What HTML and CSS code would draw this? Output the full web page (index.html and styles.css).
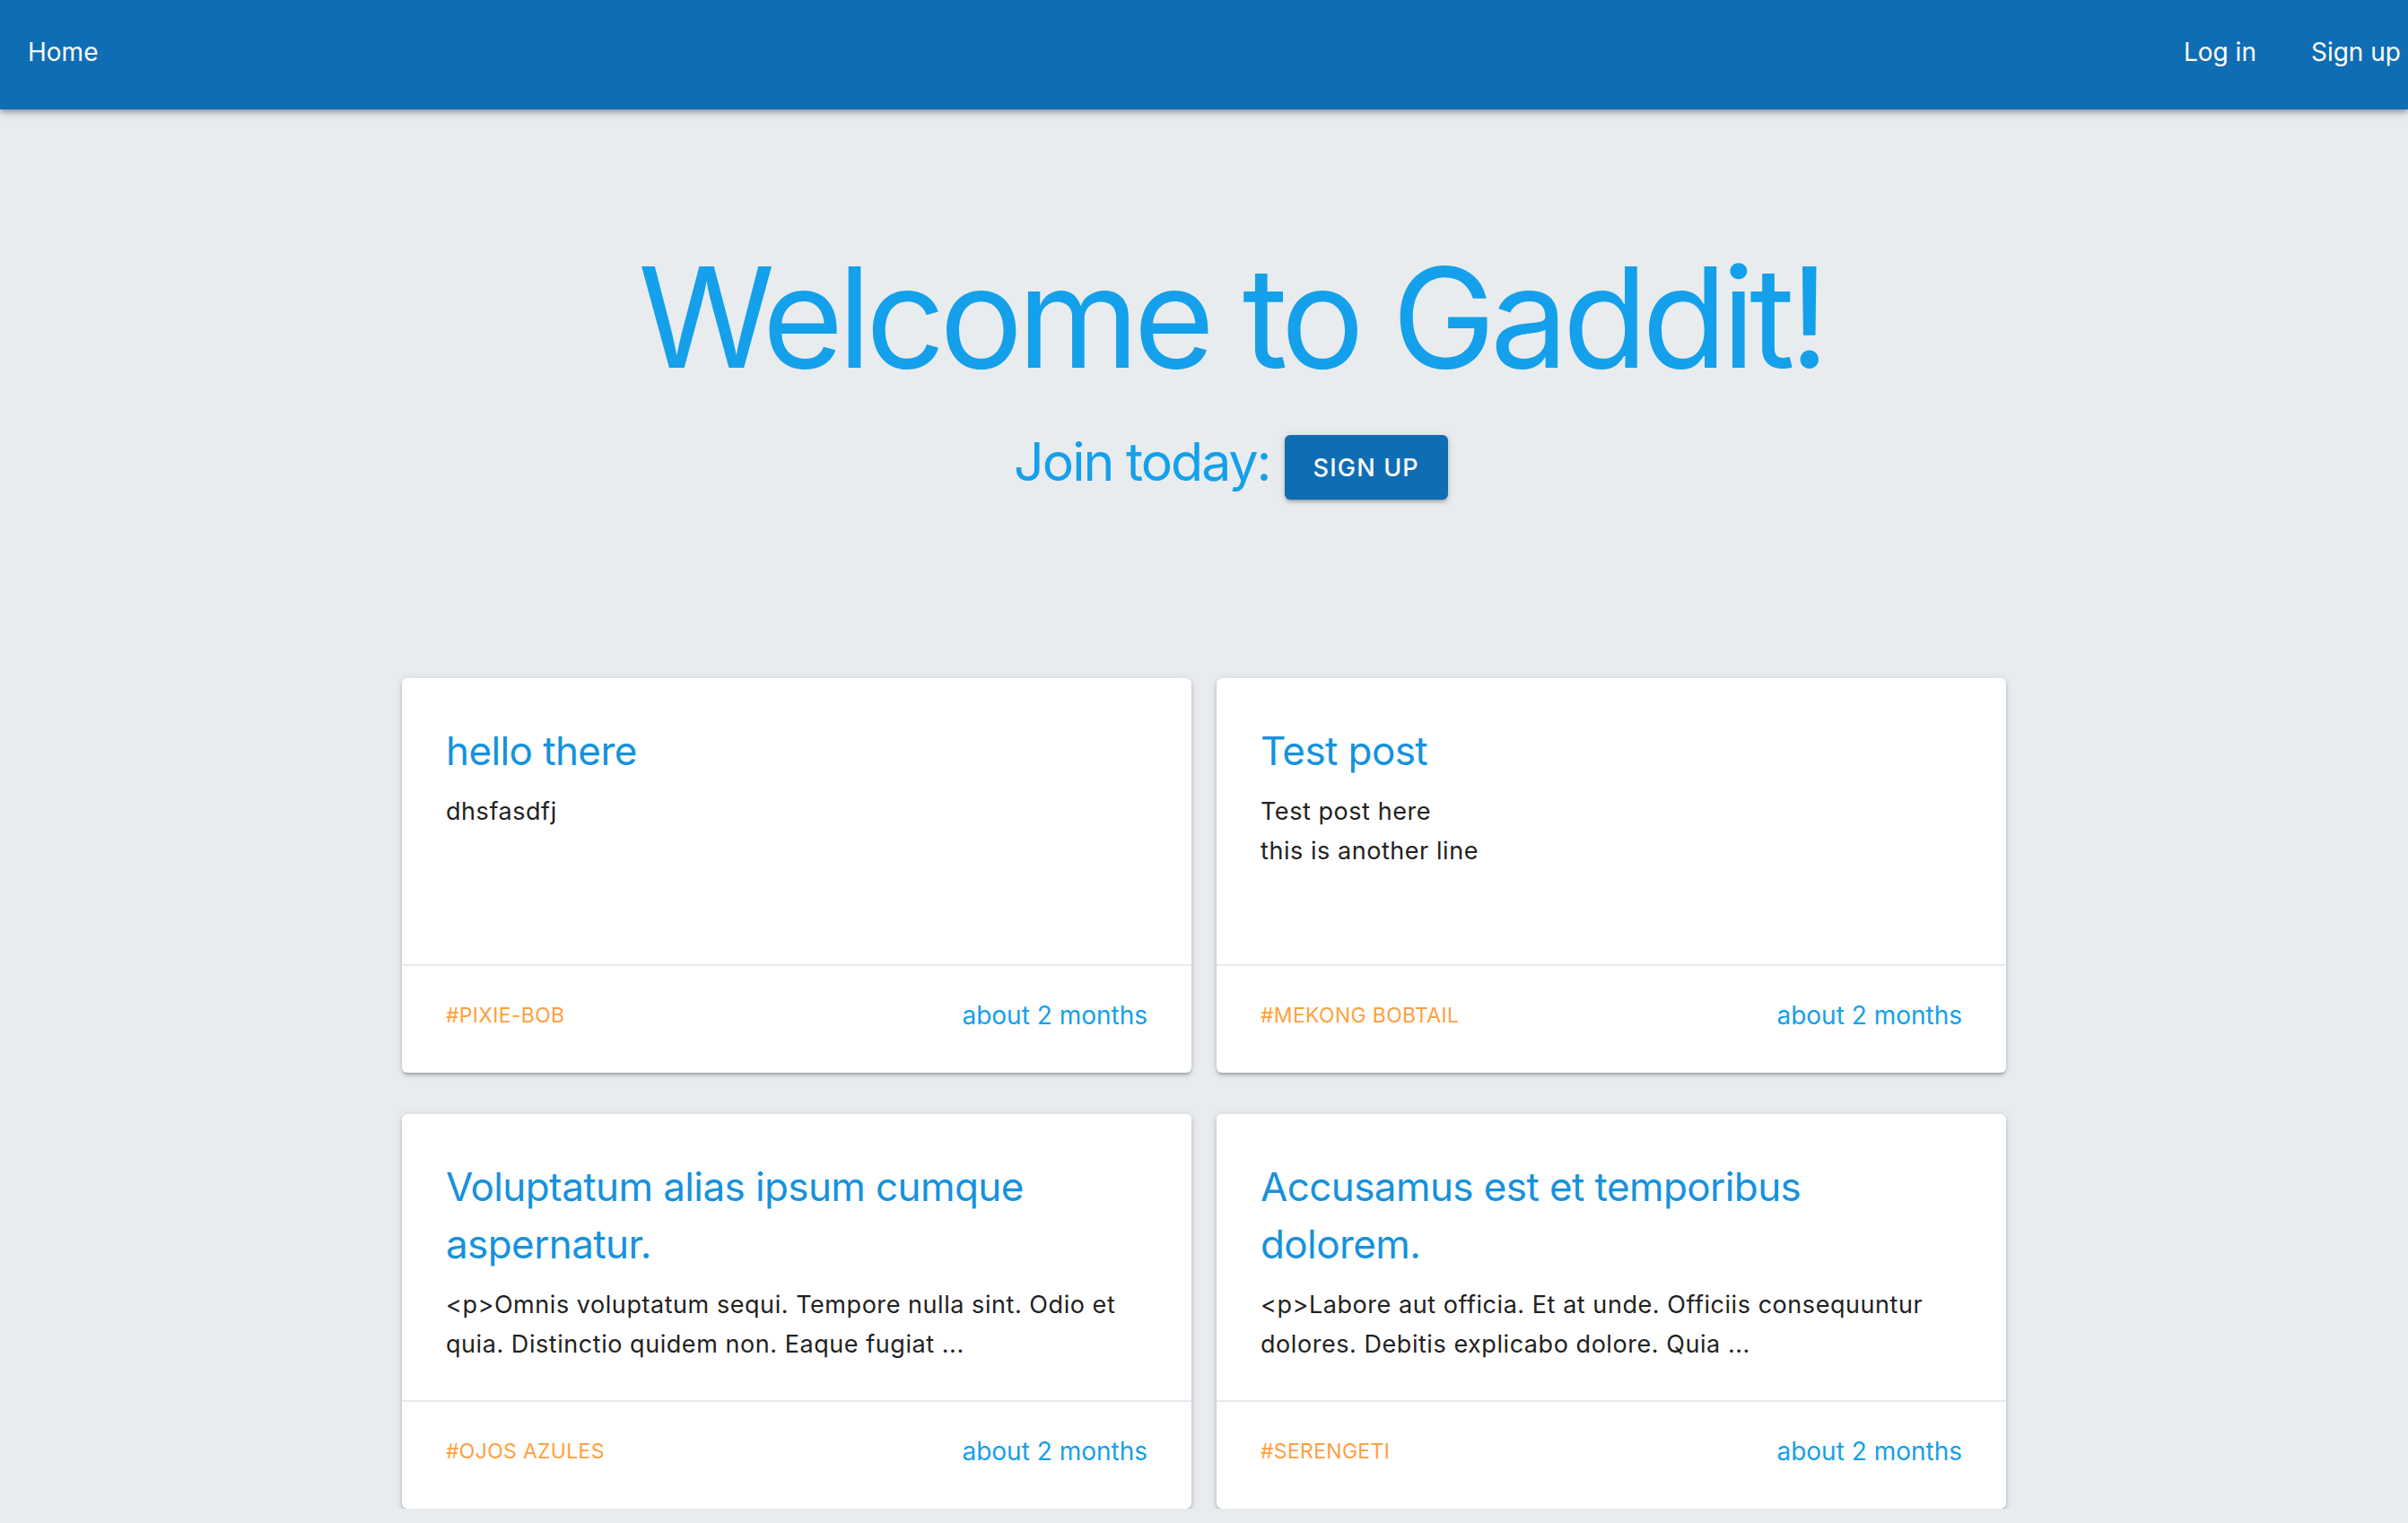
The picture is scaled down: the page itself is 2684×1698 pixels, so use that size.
FILE: index.html
```html
<!DOCTYPE html>
<html lang="en">
<head>
<meta charset="utf-8">
<title>Gaddit</title>
<link rel="stylesheet" href="styles.css">
</head>
<body>
<header class="appbar">
  <a class="nav-link" href="#">Home</a>
  <nav class="nav-right">
    <a class="nav-link" href="#">Log in</a>
    <a class="nav-link" href="#">Sign up</a>
  </nav>
</header>
<main class="main">
  <section class="hero">
    <h1 class="hero-title">Welcome to Gaddit!</h1>
    <div class="join-row">
      <span class="join-text">Join today:</span>
      <button class="btn-signup">Sign up</button>
    </div>
  </section>
  <section class="grid">
    <article class="card">
      <div class="card-body">
        <h2 class="card-title">hello there</h2>
        <p class="card-text">dhsfasdfj</p>
      </div>
      <div class="card-footer">
        <span class="tag">#pixie-bob</span>
        <span class="time">about 2 months</span>
      </div>
    </article>
    <article class="card">
      <div class="card-body">
        <h2 class="card-title">Test post</h2>
        <p class="card-text">Test post here<br>this is another line</p>
      </div>
      <div class="card-footer">
        <span class="tag">#Mekong Bobtail</span>
        <span class="time">about 2 months</span>
      </div>
    </article>
    <article class="card">
      <div class="card-body">
        <h2 class="card-title">Voluptatum alias ipsum cumque aspernatur.</h2>
        <p class="card-text">&lt;p&gt;Omnis voluptatum sequi. Tempore nulla sint. Odio et quia. Distinctio quidem non. Eaque fugiat ...</p>
      </div>
      <div class="card-footer">
        <span class="tag">#Ojos Azules</span>
        <span class="time">about 2 months</span>
      </div>
    </article>
    <article class="card">
      <div class="card-body">
        <h2 class="card-title">Accusamus est et temporibus dolorem.</h2>
        <p class="card-text">&lt;p&gt;Labore aut officia. Et at unde. Officiis consequuntur dolores. Debitis explicabo dolore. Quia ...</p>
      </div>
      <div class="card-footer">
        <span class="tag">#Serengeti</span>
        <span class="time">about 2 months</span>
      </div>
    </article>
  </section>
</main>
</body>
</html>
```

FILE: styles.css
```css
* { box-sizing: border-box; }
html, body {
  margin: 0;
  padding: 0;
}
body {
  background: #e8ecef;
  font-family: Inter, "Liberation Sans", sans-serif;
  color: #222;
  overflow: hidden;
}
.appbar {
  height: 122px;
  background: #0f6db3;
  display: flex;
  align-items: center;
  justify-content: space-between;
  padding: 0 8px 7px 31px;
  box-shadow: 0 4px 8px rgba(0,0,0,0.25), 0 2px 4px rgba(0,0,0,0.15);
  position: relative;
  z-index: 2;
}
.nav-right {
  display: flex;
  gap: 61px;
}
.nav-link {
  color: #fff;
  text-decoration: none;
  font-size: 28px;
  font-weight: 400;
}
.main {
  padding-top: 154px;
}
.hero {
  display: flex;
  flex-direction: column;
  align-items: center;
  padding-left: 60px;
}
.hero-title {
  margin: 0;
  font-size: 155px;
  line-height: 1;
  font-weight: 400;
  color: #14a0ea;
  letter-spacing: -6.3px;
}
.join-row {
  margin-top: 54px;
  display: flex;
  align-items: flex-start;
  gap: 16px;
}
.join-text {
  font-size: 59px;
  line-height: 1;
  color: #14a0ea;
  letter-spacing: -2px;
}
.btn-signup {
  height: 72px;
  padding: 0 32px;
  border: 0;
  border-radius: 6px;
  background: #0f6db3;
  color: #fff;
  font-family: inherit;
  font-size: 27px;
  font-weight: 500;
  text-transform: uppercase;
  letter-spacing: 1.2px;
  box-shadow: 0 3px 3px -2px rgba(0,0,0,0.2), 0 3px 4px rgba(0,0,0,0.14), 0 1px 8px rgba(0,0,0,0.12);
}
.grid {
  width: 1788px;
  margin: 199px auto 0;
  display: grid;
  grid-template-columns: 1fr 1fr;
  column-gap: 28px;
  row-gap: 46px;
}
.card {
  background: #fff;
  border-radius: 6px;
  box-shadow: 0 3px 3px -2px rgba(0,0,0,0.2), 0 3px 4px rgba(0,0,0,0.14), 0 1px 8px rgba(0,0,0,0.12);
  display: flex;
  flex-direction: column;
}
.card-body {
  height: 321px;
  padding: 49px 49px 0;
  border-bottom: 2px solid #e9e9ea;
}
.card-title {
  margin: 0;
  font-size: 44px;
  line-height: 64px;
  font-weight: 400;
  color: #1592dd;
  letter-spacing: -0.6px;
}
.card-text {
  margin: 14px 0 0;
  font-size: 27px;
  line-height: 44px;
  color: #222;
  letter-spacing: 0.55px;
}
.card-footer {
  height: 119px;
  padding: 0 49px 9px;
  display: flex;
  align-items: center;
  justify-content: space-between;
}
.tag {
  font-size: 23px;
  text-transform: uppercase;
  color: #ff9f40;
  letter-spacing: 0.3px;
}
.time {
  font-size: 28px;
  color: #14a0ea;
}
```
